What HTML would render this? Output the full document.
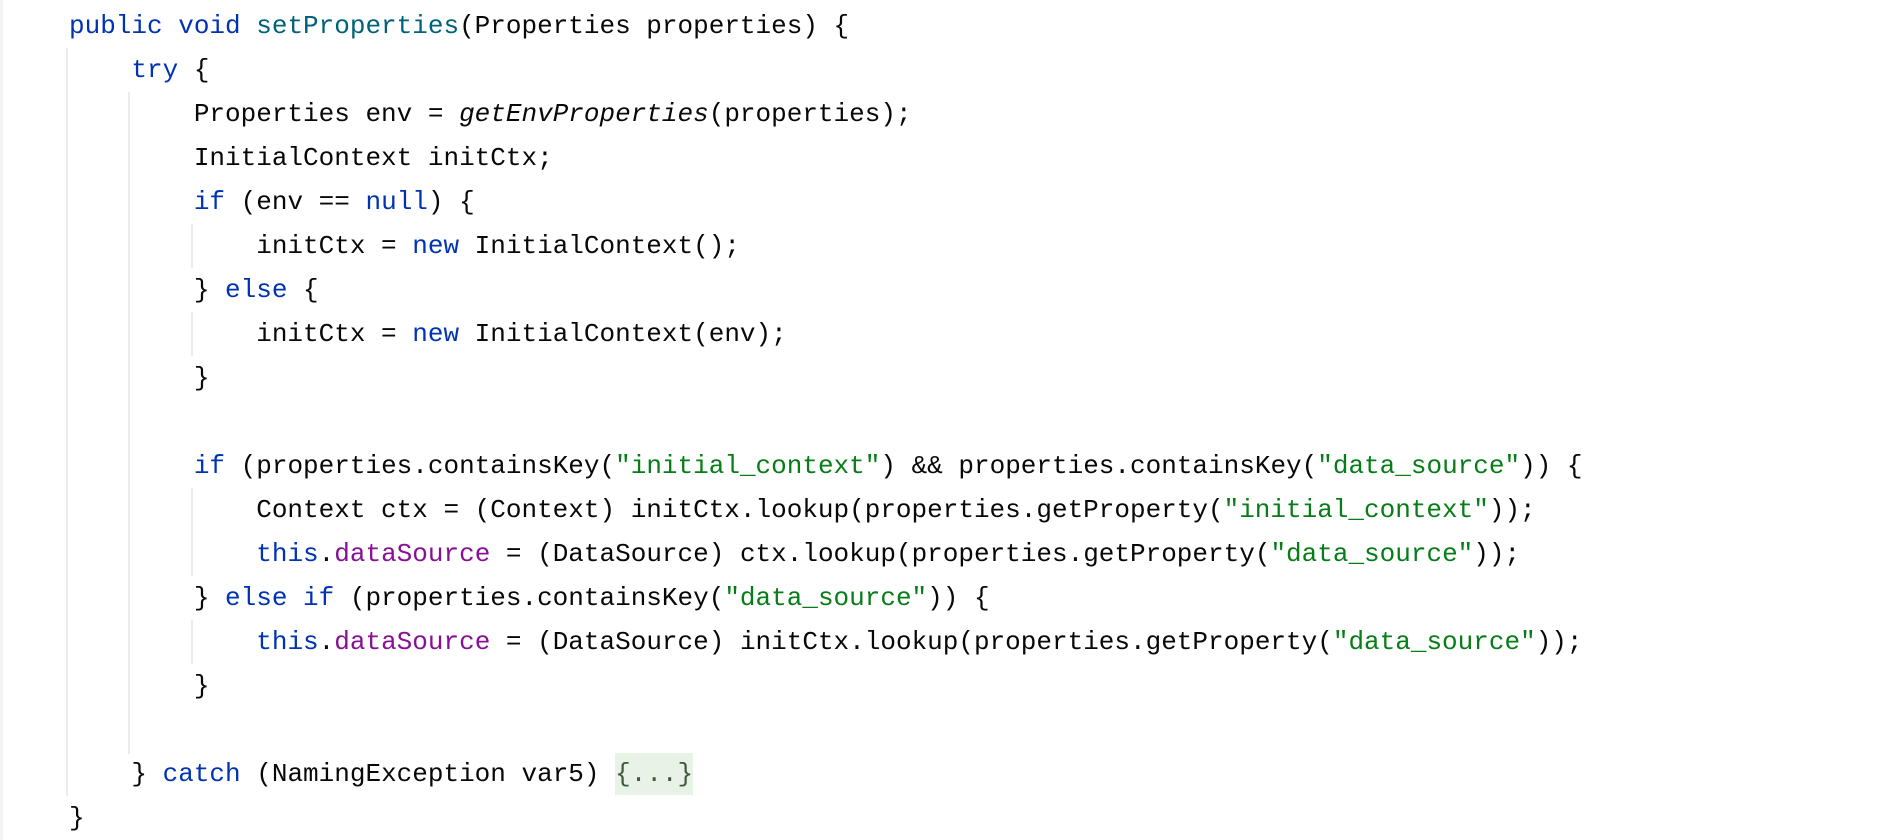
<!DOCTYPE html>
<html><head><meta charset="utf-8"><style>
html,body{margin:0;padding:0;background:#fff;width:1880px;height:840px;overflow:hidden;position:relative}
.l{position:absolute;left:69px;height:44px;line-height:44px;font-family:"Liberation Mono",monospace;font-size:26px;color:#080808;white-space:pre}
.k{color:#0033b3}.m{color:#00627a}.s{color:#067d17}.f{color:#871094}.i{font-style:italic}
.g{position:absolute;width:2px;background:#ebebef}
.fold{background:#e9f2e6;color:#3d5a3d}
</style></head><body>
<div style="position:absolute;left:0;top:0;width:3px;height:840px;background:#f3f3f3"></div>
<div class="g" style="left:66px;top:48px;height:748px"></div>
<div class="g" style="left:128px;top:92px;height:662px"></div>
<div class="g" style="left:191px;top:224px;height:44px"></div>
<div class="g" style="left:191px;top:312px;height:44px"></div>
<div class="g" style="left:191px;top:488px;height:88px"></div>
<div class="g" style="left:191px;top:620px;height:44px"></div>
<div class="l" style="top:4px"><span class="k">public void </span><span class="m">setProperties</span>(Properties properties) {</div>
<div class="l" style="top:48px">    <span class="k">try</span> {</div>
<div class="l" style="top:92px">        Properties env = <span class="i">getEnvProperties</span>(properties);</div>
<div class="l" style="top:136px">        InitialContext initCtx;</div>
<div class="l" style="top:180px">        <span class="k">if</span> (env == <span class="k">null</span>) {</div>
<div class="l" style="top:224px">            initCtx = <span class="k">new</span> InitialContext();</div>
<div class="l" style="top:268px">        } <span class="k">else</span> {</div>
<div class="l" style="top:312px">            initCtx = <span class="k">new</span> InitialContext(env);</div>
<div class="l" style="top:356px">        }</div>
<div class="l" style="top:444px">        <span class="k">if</span> (properties.containsKey(<span class="s">"initial_context"</span>) &amp;&amp; properties.containsKey(<span class="s">"data_source"</span>)) {</div>
<div class="l" style="top:488px">            Context ctx = (Context) initCtx.lookup(properties.getProperty(<span class="s">"initial_context"</span>));</div>
<div class="l" style="top:532px">            <span class="k">this</span>.<span class="f">dataSource</span> = (DataSource) ctx.lookup(properties.getProperty(<span class="s">"data_source"</span>));</div>
<div class="l" style="top:576px">        } <span class="k">else if</span> (properties.containsKey(<span class="s">"data_source"</span>)) {</div>
<div class="l" style="top:620px">            <span class="k">this</span>.<span class="f">dataSource</span> = (DataSource) initCtx.lookup(properties.getProperty(<span class="s">"data_source"</span>));</div>
<div class="l" style="top:664px">        }</div>
<div class="l" style="top:752px">    } <span class="k">catch</span> (NamingException var5) <span class="fold" style="display:inline-block;height:42px;line-height:42px">{...}</span></div>
<div class="l" style="top:796px">}</div>
</body></html>
